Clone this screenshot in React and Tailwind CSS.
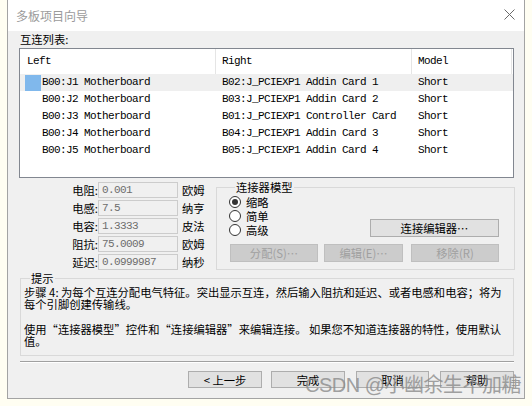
import React from "react";

const rows = [
  ["B00:J1 Motherboard", "B02:J_PCIEXP1 Addin Card 1", "Short"],
  ["B00:J2 Motherboard", "B03:J_PCIEXP1 Addin Card 2", "Short"],
  ["B00:J3 Motherboard", "B01:J_PCIEXP1 Controller Card", "Short"],
  ["B00:J4 Motherboard", "B04:J_PCIEXP1 Addin Card 3", "Short"],
  ["B00:J5 Motherboard", "B05:J_PCIEXP1 Addin Card 4", "Short"],
];

const params = [
  ["电阻:", "0.001", "欧姆"],
  ["电感:", "7.5", "纳亨"],
  ["电容:", "1.3333", "皮法"],
  ["阻抗:", "75.0009", "欧姆"],
  ["延迟:", "0.0999987", "纳秒"],
];

const radios = [
  ["缩略", true],
  ["简单", false],
  ["高级", false],
];

function Radio({ label, checked }) {
  return (
    <div className="h-[14px] flex items-center">
      <span className="w-[12px] h-[12px] rounded-full border border-[#333333] bg-white flex items-center justify-center">
        {checked && <span className="w-[6px] h-[6px] rounded-full bg-[#333333]" />}
      </span>
      <span className="ml-[5px] text-[11.3px] leading-[12px] text-black">{label}</span>
    </div>
  );
}

export default function App() {
  const mono = "font-['Liberation_Mono','Noto_Sans_CJK_SC',monospace] text-[11px] tracking-[-0.6px]";
  return (
    <div className="w-[532px] h-[406px] bg-[#fffef2] relative overflow-hidden font-['Noto_Sans_CJK_SC',sans-serif] text-black">
      <div className="ml-[7px] w-[518px] h-[399px] border-x border-b border-[#a3a3a3] flex flex-col">
        {/* title bar */}
        <div className="h-[31px] shrink-0 bg-white flex items-center justify-between pl-[8px] pr-[9px]">
          <span className="text-[12px] leading-[14px] text-[#9b9b9b]">多板项目向导</span>
          <svg width="11" height="11" viewBox="0 0 11 11" className="mb-[2px]">
            <path d="M0.5 0.5 L10.5 10.5 M10.5 0.5 L0.5 10.5" stroke="#6a6a6a" strokeWidth="1" fill="none" />
          </svg>
        </div>

        {/* body */}
        <div className="flex-1 bg-[#f0f0f0] pl-[11px] pr-[10px] flex flex-col">
          <div className="h-[17px] leading-[17px] pl-[1px] text-[11.3px]">互连列表:</div>

          {/* list */}
          <div className="h-[130px] shrink-0 border border-[#828790] bg-white flex flex-col">
            <div className={`h-[25px] flex ${mono}`}>
              <div className="w-[196px] border-r border-[#e5e5e5] pl-[7px] flex items-center">Left</div>
              <div className="w-[196px] border-r border-[#e5e5e5] pl-[6px] flex items-center">Right</div>
              <div className="w-[100px] border-r border-[#e5e5e5] pl-[6px] flex items-center">Model</div>
            </div>
            {rows.map((r, i) => (
              <div key={i} className={`h-[17px] flex items-center ${mono} ${i === 0 ? "bg-[#efefef]" : ""}`}>
                <div className="w-[196px] flex items-center">
                  <span className={`ml-[5px] w-[16px] h-[16px] ${i === 0 ? "bg-[#80b8ec]" : ""}`} />
                  <span className="ml-[1px] whitespace-nowrap">{r[0]}</span>
                </div>
                <div className="w-[196px] pl-[6px] whitespace-nowrap">{r[1]}</div>
                <div className="w-[100px] pl-[6px] whitespace-nowrap">{r[2]}</div>
              </div>
            ))}
          </div>

          {/* lower section */}
          <div className="mt-[3px] flex items-start">
            <div className="mt-[1px] flex flex-col gap-[2px]">
              {params.map((p) => (
                <div key={p[0]} className="h-[16px] flex items-center">
                  <span className="w-[79px] text-right text-[11.3px] leading-[12px]">{p[0]}</span>
                  <span className={`w-[80px] h-[16px] border border-[#cccccc] bg-[#f0f0f0] pl-[3px] flex items-center text-[#6d6d6d] ${mono}`}>
                    {p[1]}
                  </span>
                  <span className="ml-[4px] w-[30px] text-[11.3px] leading-[12px]">{p[2]}</span>
                </div>
              ))}
            </div>

            <fieldset className="ml-[4px] w-[298px] border border-[#d9d9d9] pl-[12px] pr-[15px] pb-[7px]">
              <legend className="ml-[6px] px-[1px] text-[11.3px] leading-[12px]">连接器模型</legend>
              <div className="mt-[2px] flex items-end justify-between">
                <div className="flex flex-col">
                  {radios.map((r) => (
                    <Radio key={r[0]} label={r[0]} checked={r[1]} />
                  ))}
                </div>
                <button className="w-[129px] h-[18px] border border-[#adadad] bg-[#e1e1e1] text-[11.3px] leading-[12px] text-black">
                  连接编辑器…
                </button>
              </div>
              <div className="mt-[7px] ml-[1px] flex">
                <button className="w-[88px] h-[18px] border border-[#bfbfbf] bg-[#cccccc] text-[11.3px] leading-[12px] text-[#a0a0a0]">
                  分配(S)…
                </button>
                <button className="ml-[6px] w-[79px] h-[18px] border border-[#bfbfbf] bg-[#cccccc] text-[11.3px] leading-[12px] text-[#a0a0a0]">
                  编辑(E)…
                </button>
                <button className="ml-[8px] w-[88px] h-[18px] border border-[#bfbfbf] bg-[#cccccc] text-[11.3px] leading-[12px] text-[#a0a0a0]">
                  移除(R)
                </button>
              </div>
            </fieldset>
          </div>

          {/* hint */}
          <fieldset className="mt-[2px] ml-[1px] w-[494px] border border-[#d9d9d9] pl-[3px] pb-[8px]">
            <legend className="ml-[6px] px-[1px] text-[11.3px] leading-[12px]">提示</legend>
            <p className="pt-[2px] text-[11.3px] leading-[12px] whitespace-nowrap">
              步骤 4: 为每个互连分配电气特征。突出显示互连，然后输入阻抗和延迟、或者电感和电容；将为
              <br />
              每个引脚创建传输线。
            </p>
            <p className="mt-[13px] text-[11.3px] leading-[12px] whitespace-nowrap">
              使用“连接器模型”控件和“连接编辑器”来编辑连接。 如果您不知道连接器的特性，使用默认
              <br />
              值。
            </p>
          </fieldset>

          {/* separator */}
          <div className="mt-[5px] ml-[1px] w-[494px] h-[2px] border-t border-[#a0a0a0] bg-white" />

          {/* buttons */}
          <div className="mt-[8px] flex justify-end">
            <button className="w-[74px] h-[17px] border border-[#adadad] bg-[#e1e1e1] text-[11.3px] leading-[12px]">
              &lt; 上一步
            </button>
            <button className="ml-[9px] w-[74px] h-[17px] border border-[#adadad] bg-[#e1e1e1] text-[11.3px] leading-[12px]">
              完成
            </button>
            <button className="ml-[11px] w-[73px] h-[17px] border border-[#adadad] bg-[#e1e1e1] text-[11.3px] leading-[12px]">
              取消
            </button>
            <button className="ml-[11px] w-[74px] h-[17px] border border-[#adadad] bg-[#e1e1e1] text-[11.3px] leading-[12px]">
              帮助
            </button>
          </div>
        </div>
      </div>

      {/* watermark */}
      <div className="absolute left-[305px] top-[373px] text-[20px] leading-[24px] text-[#8c8c8c] opacity-80 whitespace-nowrap font-['Liberation_Sans','Noto_Sans_CJK_SC',sans-serif] tracking-[-0.5px]">
        CSDN @小幽余生不加糖
      </div>
    </div>
  );
}
